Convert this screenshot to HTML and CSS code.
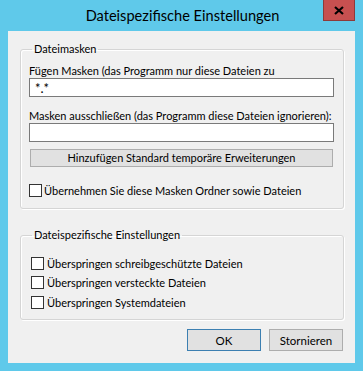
FILE: index.html
```html
<!DOCTYPE html>
<html lang="de">
<head>
    <meta charset="UTF-8">
    <title>Dateispezifische Einstellungen</title>
    <link rel="stylesheet" href="styles.css">
</head>
<body>

<div class="window">
    <div class="titlebar">
        <span class="title">Dateispezifische Einstellungen</span>
        <button class="close-button">
            <svg width="10" height="9" viewBox="0 0 10 9">
                <path d="M1 1 L9 8 M9 1 L1 8" stroke="#000" stroke-width="2.2"/>
            </svg>
        </button>
    </div>

    <div class="client">
        <fieldset class="group group-masks">
            <legend>Dateimasken</legend>

            <label class="field-label" for="include">Fügen Masken (das Programm nur diese Dateien zu</label>
            <input type="text" id="include" class="text-input" value="*.*">

            <label class="field-label label-gap" for="exclude">Masken ausschließen (das Programm diese Dateien ignorieren):</label>
            <input type="text" id="exclude" class="text-input">

            <button class="wide-button">Hinzufügen Standard temporäre Erweiterungen</button>

            <label class="check-row check-first">
                <span class="checkbox"></span>Übernehmen Sie diese Masken Ordner sowie Dateien
            </label>
        </fieldset>

        <fieldset class="group group-options">
            <legend>Dateispezifische Einstellungen</legend>

            <label class="check-row">
                <span class="checkbox"></span>Überspringen schreibgeschützte Dateien
            </label>
            <label class="check-row">
                <span class="checkbox"></span>Überspringen versteckte Dateien
            </label>
            <label class="check-row">
                <span class="checkbox"></span>Überspringen Systemdateien
            </label>
        </fieldset>

        <div class="actions">
            <button class="dialog-button default">OK</button>
            <button class="dialog-button">Stornieren</button>
        </div>
    </div>
</div>

</body>
</html>
```

FILE: styles.css
```css
body {
    margin: 0;
    font-family: Lato, "Noto Sans", sans-serif;
    font-size: 11px;
    color: #000;
}

.window {
    width: 363px;
    height: 371px;
    box-sizing: border-box;
    background-color: #5fc9ea;
    padding: 0 8px 8px 8px;
    display: flex;
    flex-direction: column;
}

.titlebar {
    position: relative;
    height: 31px;
    flex-shrink: 0;
    display: flex;
    justify-content: center;
    align-items: center;
}

.title {
    font-size: 14.6px;
    margin-top: -1px;
    margin-left: 2px;
}

.close-button {
    position: absolute;
    top: 0;
    right: 0;
    width: 32px;
    height: 21px;
    background-color: #c75050;
    border: 1px solid #8e3a3a;
    border-top: none;
    padding: 0;
    display: flex;
    align-items: center;
    justify-content: center;
}

.client {
    flex: 1;
    background-color: #f0f0f0;
    padding: 9px 11px 0 12px;
    display: flex;
    flex-direction: column;
}

.group {
    margin: 0;
    min-width: 0;
    padding: 0 9px 0 8px;
    border: 1px solid #d5d5d5;
    border-radius: 3px;
    box-shadow: 1px 1px 0 #fff, inset 1px 1px 0 #fff;
    display: flex;
    flex-direction: column;
}

.group legend {
    padding: 0 2px;
    margin-left: 3px;
    line-height: 18px;
}

.group-masks {
    height: 169px;
    box-sizing: border-box;
}

.group-options {
    margin-top: 17px;
    height: 94px;
    box-sizing: border-box;
}

.field-label {
    display: block;
    line-height: 15px;
    margin-top: 5px;
    white-space: nowrap;
}

.label-gap {
    margin-top: 11px;
}

.text-input {
    height: 19px;
    box-sizing: border-box;
    border: 1px solid #7a7a7a;
    background: #fff;
    font-family: inherit;
    font-size: 13px;
    padding: 0 0 0 5px;
    margin: 0;
    outline: none;
}

.wide-button {
    margin: 7px 1px 0 1px;
    height: 18px;
    background-color: #e1e1e1;
    border: 1px solid #adadad;
    font-family: inherit;
    font-size: 11px;
    padding: 0;
    line-height: 14px;
}

.check-row {
    display: flex;
    align-items: center;
    line-height: 16px;
    height: 19px;
    white-space: nowrap;
}

.check-first {
    margin-top: 14px;
}

.group-options .check-row {
    margin-left: 2px;
}

.group-options .check-row:first-of-type {
    margin-top: 10px;
}

.group-options .check-row:last-of-type {
    margin-top: 1px;
}

.checkbox {
    width: 11px;
    height: 11px;
    border: 1px solid #333;
    background: #fff;
    margin-right: 2px;
    flex-shrink: 0;
}

.group-options .checkbox {
    margin-right: 3px;
}

.actions {
    display: flex;
    justify-content: flex-end;
    gap: 8px;
    margin-top: 9px;
    padding-right: 1px;
}

.dialog-button {
    width: 74px;
    height: 22px;
    background-color: #e1e1e1;
    border: 1px solid #adadad;
    font-family: inherit;
    font-size: 11.5px;
    padding: 0;
}

.dialog-button.default {
    border-color: #3c7fb1;
}
```
